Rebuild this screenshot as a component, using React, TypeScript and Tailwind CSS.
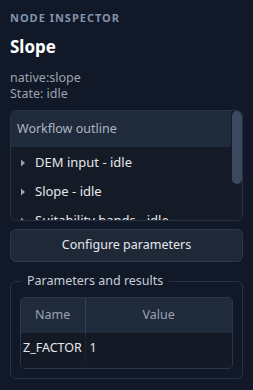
import React from 'react';

const items = ['DEM input - idle', 'Slope - idle', 'Suitability bands - idle'];

const Caret = () => (
    <svg width="6" height="8" viewBox="0 0 6 8" className="shrink-0">
        <path d="M1 0.5 L5 4 L1 7.5 Z" fill="#9ca3af" />
    </svg>
);

const App: React.FC = () => {
    return (
        <div
            className="w-[253px] h-[390px] bg-[#111827] text-[#e5e7eb] px-[10px] pt-[11px] overflow-hidden"
            style={{ fontFamily: '"Noto Sans", "Open Sans", sans-serif' }}
        >
            <div className="text-[11px] font-bold tracking-[0.09em] uppercase text-[#8193ad] leading-[14px]">
                Node Inspector
            </div>
            <h2 className="mt-[11px] text-[17px] font-bold text-white leading-[22px]">Slope</h2>
            <div className="mt-[12px] text-[12.5px] leading-[16px] text-[#9ca3af]">
                <div>native:slope</div>
                <div>State: idle</div>
            </div>

            <div className="mt-[8px] relative h-[111px] rounded-[6px] border border-[#273245] bg-[#141b27] overflow-hidden">
                <div className="h-[36px] bg-[#1f2a3b] flex items-center pl-[6px] text-[12.5px] text-[#aeb6c2]">
                    Workflow outline
                </div>
                <div className="pt-[1px]">
                    {items.map((it) => (
                        <div key={it} className="h-[29px] flex items-center gap-[9px] pl-[9px] text-[13px] text-[#e5e7eb]">
                            <Caret />
                            <span>{it}</span>
                        </div>
                    ))}
                </div>
                <div className="absolute top-0 right-0 w-[11px] h-full bg-[#151c28]">
                    <div className="mx-auto mt-0 w-[10px] h-[73px] rounded-[5px] bg-[#3a4960]" />
                </div>
            </div>

            <button className="mt-[8px] w-full h-[33px] rounded-[6px] border border-[#2c384b] bg-[#1e2837] text-[12.5px] text-[#e5e7eb]">
                Configure parameters
            </button>

            <fieldset className="mt-[11px] rounded-[6px] border border-[#273245] px-[9px] pb-[9px] pt-0">
                <legend className="ml-[1px] px-[6px] text-[12.5px] text-[#c7ced8] leading-[16px]">
                    Parameters and results
                </legend>
                <div className="mt-[8px] rounded-[5px] border border-[#2a3649] overflow-hidden">
                    <table className="w-full border-collapse text-[12.5px]">
                        <thead>
                            <tr className="bg-[#1f2a3b] h-[35px] text-[#9aa3b0]">
                                <th className="w-[64px] font-normal border-r border-[#34425a]">Name</th>
                                <th className="font-normal">Value</th>
                            </tr>
                        </thead>
                        <tbody>
                            <tr className="bg-[#131a25] h-[30px] text-[#e5e7eb]">
                                <td className="pl-[2px] border-r border-[#1c2432]">Z_FACTOR</td>
                                <td className="pl-[4px]">1</td>
                            </tr>
                            <tr className="h-[5px] bg-[#141b27]">
                                <td colSpan={2} />
                            </tr>
                        </tbody>
                    </table>
                </div>
            </fieldset>
        </div>
    );
};

export default App;
